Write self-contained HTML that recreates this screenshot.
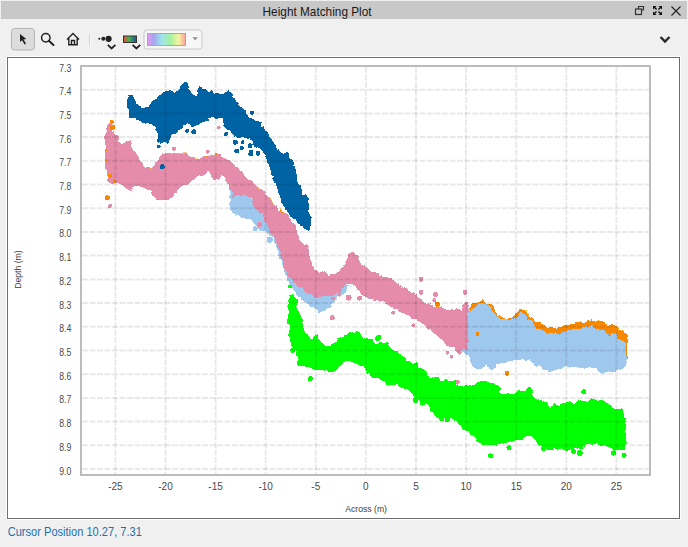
<!DOCTYPE html>
<html><head><meta charset="utf-8">
<style>
html,body{margin:0;padding:0;}
body{width:688px;height:547px;background:#f0f0f0;position:relative;overflow:hidden;font-family:"Liberation Sans",sans-serif;}
svg{position:absolute;left:0;top:0;}
</style></head>
<body>
<svg width="688" height="547" viewBox="0 0 688 547" shape-rendering="auto">
<!-- title bar -->
<rect x="1" y="1" width="686" height="18" fill="#c8c8c8"/>
<text x="262.6" y="16" font-family="Liberation Sans" font-size="12.2" fill="#1a1a1a" textLength="109" lengthAdjust="spacingAndGlyphs">Height Matching Plot</text>
<!-- restore icon -->
<g fill="none" stroke="#333" stroke-width="1.2">
<rect x="635.5" y="9" width="6" height="5.5"/>
<path d="M638.5 9 V6.5 H643.5 V10 H641.5"/>
</g>
<!-- fullscreen icon -->
<g fill="#111">
<path d="M653 6 h3.5 l-1.2 1.2 1.8 1.8 -1 1 -1.8 -1.8 -1.3 1.3z"/>
<path d="M662 6 v3.5 l-1.2 -1.2 -1.8 1.8 -1 -1 1.8 -1.8 -1.3 -1.3z"/>
<path d="M653 15 v-3.5 l1.2 1.2 1.8 -1.8 1 1 -1.8 1.8 1.3 1.3z"/>
<path d="M662 15 h-3.5 l1.2 -1.2 -1.8 -1.8 1 -1 1.8 1.8 1.3 -1.3z"/>
</g>
<!-- close -->
<path d="M671.5 6.5 L680.5 15.5 M680.5 6.5 L671.5 15.5" stroke="#222" stroke-width="1.1" fill="none"/>

<!-- toolbar -->
<rect x="11.5" y="28.5" width="23" height="21.5" rx="3" fill="#dcdcdc" stroke="#b4b4b4" stroke-width="1"/>
<path d="M20 34 L20 42 L22 40.2 L24.6 44.4 L26 43.6 L23.5 39.4 L26.3 39 Z" fill="#222"/>
<circle cx="45.8" cy="37.8" r="4.2" fill="none" stroke="#222" stroke-width="1.5"/>
<path d="M48.8 40.8 L53.5 45" stroke="#222" stroke-width="2" stroke-linecap="round"/>
<g fill="none" stroke="#222" stroke-width="1.4">
<path d="M67 39.5 L73 33.5 L79 39.5 M68.8 38.2 V44.8 H77.2 V38.2 M71.5 44.8 V40.5 H74.5 V44.8"/>
</g>
<rect x="89" y="34" width="1" height="11" fill="#d4d4d4"/>
<rect x="90" y="34" width="1" height="11" fill="#fafafa"/>
<g fill="#222">
<circle cx="99.3" cy="38.8" r="1"/>
<circle cx="103.3" cy="38.8" r="2"/>
<circle cx="108.6" cy="38.8" r="3.1"/>
</g>
<path d="M107.8 44.8 L111.6 48.5 L115.4 44.8" fill="none" stroke="#222" stroke-width="1.8"/>
<defs>
<linearGradient id="cb" x1="0" x2="1" y1="0" y2="0">
<stop offset="0" stop-color="#e8502a"/><stop offset="0.45" stop-color="#3cb34a"/><stop offset="1" stop-color="#1f4fa0"/>
</linearGradient>
<linearGradient id="pal" x1="0" x2="1" y1="0" y2="0">
<stop offset="0" stop-color="#e39cef"/>
<stop offset="0.17" stop-color="#a3a6f0"/>
<stop offset="0.38" stop-color="#9fe7ea"/>
<stop offset="0.6" stop-color="#a4f0a2"/>
<stop offset="0.82" stop-color="#f5f5a0"/>
<stop offset="1" stop-color="#f7a09c"/>
</linearGradient>
</defs>
<rect x="123.5" y="36" width="13" height="6.5" fill="url(#cb)" stroke="#333" stroke-width="1"/>
<path d="M132.6 44.8 L136.4 48.5 L140.2 44.8" fill="none" stroke="#222" stroke-width="1.8"/>
<rect x="144" y="30" width="58" height="19" rx="3" fill="#f7f7f7" stroke="#c8c8c8" stroke-width="1"/>
<rect x="147.5" y="33.5" width="38" height="12" fill="url(#pal)" stroke="#a8a8a8" stroke-width="1"/>
<path d="M192.4 37.3 L198 37.3 L195.2 40.3 Z" fill="#8c8c8c"/>
<path d="M660.5 37 L665 41.5 L669.5 37" fill="none" stroke="#2a2a2a" stroke-width="2.4"/>

<!-- chart frame -->
<rect x="6.5" y="56.5" width="674" height="463" fill="none" stroke="#ffffff" stroke-width="1"/>
<rect x="7.5" y="57.5" width="672" height="461" fill="#ffffff" stroke="#6e6e6e" stroke-width="1"/>

<!-- data -->
<defs><filter id="rough" x="-5%" y="-5%" width="110%" height="110%"><feTurbulence type="fractalNoise" baseFrequency="0.2" numOctaves="1" seed="3" result="t"/><feDisplacementMap in="SourceGraphic" in2="t" scale="5" xChannelSelector="R" yChannelSelector="G"/></filter></defs>
<!--DATA-->
<g filter="url(#rough)">
<path shape-rendering="crispEdges" fill="#f78800" d="M467.0 306.0 L469.1 308.3 L473.7 302.9 L479.2 301.0 L484.7 300.1 L493.8 308.3 L498.4 314.7 L504.8 317.5 L509.4 318.4 L514.8 314.7 L520.3 308.3 L524.9 310.2 L530.4 316.6 L535.0 321.1 L542.3 323.9 L549.6 328.4 L556.9 327.5 L560.5 328.4 L566.0 325.6 L573.3 323.8 L582.4 322.0 L591.6 319.3 L594.3 320.2 L600.7 322.0 L608.0 324.7 L615.3 325.6 L619.0 329.3 L625.4 333.0 L626.7 333.9 L626.7 359.5 L620.0 350.0 L600.0 340.0 L560.0 340.0 L500.0 325.0 L467.0 315.0 Z"/>
<path d="M197.0 159.5 L211.0 156.5" stroke="#f78800" stroke-width="2.2" fill="none" stroke-linecap="round"/><path d="M216.0 154.0 L225.5 159.5" stroke="#f78800" stroke-width="2.2" fill="none" stroke-linecap="round"/><path d="M257.3 187.5 L271.9 202.2" stroke="#f78800" stroke-width="2.2" fill="none" stroke-linecap="round"/><path d="M281.0 210.4 L286.6 215.0" stroke="#f78800" stroke-width="2.2" fill="none" stroke-linecap="round"/><path d="M147.0 168.0 L153.0 168.5" stroke="#f78800" stroke-width="2.2" fill="none" stroke-linecap="round"/><path d="M163.0 154.0 L186.0 154.5" stroke="#f78800" stroke-width="2.2" fill="none" stroke-linecap="round"/>
<path shape-rendering="crispEdges" fill="#9fc8ee" d="M240.0 180.0 L229.5 190.0 L230.2 197.3 L229.5 204.6 L231.0 211.9 L237.5 216.3 L244.9 217.8 L251.4 219.2 L254.4 223.6 L257.3 228.0 L260.9 231.7 L266.8 232.4 L270.4 236.8 L274.1 239.7 L277.0 248.5 L279.9 257.3 L282.9 266.0 L286.5 278.4 L291.9 287.5 L299.3 296.7 L306.6 303.1 L315.7 307.6 L318.4 313.1 L324.8 310.4 L330.3 305.8 L335.8 299.4 L343.1 293.0 L348.6 287.5 L355.9 286.6 L361.4 293.0 L370.0 299.0 L380.0 301.0 L390.0 305.0 L400.0 311.0 L410.0 316.0 L420.0 321.0 L430.0 328.0 L440.0 338.0 L450.0 346.0 L460.0 351.0 L466.0 353.0 L471.0 360.4 L472.8 367.8 L480.1 369.6 L485.6 365.9 L492.0 369.6 L496.6 364.1 L505.7 362.3 L513.0 360.4 L518.5 360.4 L524.0 358.6 L525.8 363.2 L529.5 358.6 L533.1 362.3 L535.0 367.8 L540.4 365.9 L544.1 369.6 L551.4 371.4 L560.0 367.8 L566.0 366.8 L573.3 366.8 L582.4 369.5 L587.9 367.7 L597.0 369.5 L604.4 373.2 L617.2 371.4 L626.3 366.8 L626.3 343.0 L618.1 338.4 L615.3 333.0 L609.8 334.8 L604.4 330.2 L597.0 329.3 L591.6 325.6 L582.4 328.4 L573.3 329.3 L564.1 331.1 L559.6 334.8 L555.0 332.0 L553.0 334.0 L546.0 332.0 L538.0 328.0 L531.0 322.0 L525.0 314.0 L520.0 313.0 L515.0 318.0 L510.0 320.0 L500.0 318.0 L492.0 309.0 L486.0 302.0 L480.0 303.0 L470.0 310.0 L467.0 307.0 L466.0 320.0 L440.0 318.0 L400.0 300.0 L370.0 288.0 L340.0 285.0 L310.0 282.0 L292.0 268.0 L276.0 232.0 L256.0 202.0 L240.0 192.0 Z"/>
<path shape-rendering="crispEdges" fill="#e48caa" d="M105.5 132.0 L108.2 122.8 L111.0 121.0 L112.8 128.3 L114.6 134.7 L117.4 135.6 L118.3 142.0 L123.8 142.9 L128.3 142.0 L131.1 141.1 L132.0 148.4 L135.6 153.9 L139.3 159.4 L143.0 164.8 L145.7 167.6 L151.2 168.5 L154.8 164.8 L158.5 158.4 L163.1 153.9 L168.6 152.0 L173.1 153.0 L178.6 153.9 L185.9 153.9 L191.4 157.5 L197.3 159.0 L203.2 157.5 L211.9 156.1 L217.0 153.9 L221.4 154.6 L225.1 159.0 L230.9 161.2 L234.6 164.9 L238.2 169.2 L243.4 173.6 L248.5 179.5 L252.9 182.4 L257.3 186.8 L263.1 191.9 L267.5 197.0 L272.6 201.7 L278.5 210.5 L285.8 213.4 L291.6 219.2 L296.0 226.5 L297.5 233.9 L299.3 240.0 L304.7 245.5 L308.4 248.2 L309.3 256.5 L312.0 263.8 L314.8 270.2 L319.4 272.0 L323.9 270.2 L328.5 274.7 L335.8 273.8 L341.3 269.3 L346.8 261.9 L348.6 253.7 L352.3 251.9 L357.8 256.5 L359.6 263.8 L365.1 265.6 L373.0 273.1 L381.1 275.1 L391.2 277.1 L395.2 282.1 L405.2 288.2 L413.3 293.2 L419.3 297.2 L425.4 302.3 L433.4 305.3 L441.5 307.3 L447.5 310.3 L453.5 310.3 L457.6 308.3 L461.6 310.3 L463.6 303.3 L467.5 303.3 L467.5 348.5 L465.6 348.5 L459.6 353.6 L453.5 348.5 L449.5 346.5 L441.5 340.5 L435.4 334.4 L429.4 329.4 L423.4 324.4 L417.3 320.4 L413.3 318.4 L405.2 314.3 L397.2 310.3 L387.1 304.3 L377.1 300.2 L369.0 298.2 L365.1 296.7 L359.6 291.2 L354.1 284.8 L348.6 283.9 L341.3 289.4 L335.8 294.8 L328.5 296.7 L321.2 296.7 L315.7 296.7 L308.4 293.0 L301.1 287.5 L293.8 282.0 L288.3 276.6 L284.0 266.5 L280.5 256.0 L277.0 242.6 L274.1 236.8 L269.7 232.4 L266.8 226.5 L263.9 219.2 L262.4 211.9 L258.7 213.4 L258.0 209.0 L252.9 204.6 L251.4 198.8 L243.4 194.4 L237.5 195.8 L232.4 197.3 L231.7 190.0 L228.7 189.7 L228.0 183.9 L225.1 178.0 L221.4 175.1 L219.2 180.2 L213.4 179.5 L211.2 175.1 L207.5 171.4 L206.1 174.4 L200.2 175.1 L195.8 177.3 L190.0 183.1 L180.4 186.8 L173.1 195.9 L167.6 200.5 L158.5 199.6 L153.0 195.9 L151.2 190.4 L145.7 188.6 L136.6 186.8 L129.3 190.4 L122.9 186.8 L118.3 183.1 L111.0 183.1 L108.2 181.3 L107.3 174.0 L105.5 164.8 L105.1 146.6 Z"/>
</g>
<circle shape-rendering="crispEdges" cx="112.8" cy="127.4" r="2.5" fill="#f78800"/><circle shape-rendering="crispEdges" cx="111.9" cy="121.9" r="2.0" fill="#f78800"/><circle shape-rendering="crispEdges" cx="107.3" cy="197.8" r="2.5" fill="#f78800"/><circle shape-rendering="crispEdges" cx="110.0" cy="175.8" r="2.0" fill="#f78800"/><circle shape-rendering="crispEdges" cx="114.6" cy="181.3" r="2.0" fill="#f78800"/><circle shape-rendering="crispEdges" cx="437.4" cy="304.3" r="2.5" fill="#f78800"/><circle shape-rendering="crispEdges" cx="507.0" cy="373.3" r="2.5" fill="#f78800"/><circle shape-rendering="crispEdges" cx="477.4" cy="333.9" r="2.0" fill="#f78800"/><circle shape-rendering="crispEdges" cx="106.0" cy="160.0" r="1.5" fill="#f78800"/><circle shape-rendering="crispEdges" cx="106.0" cy="150.0" r="1.5" fill="#f78800"/>
<circle shape-rendering="crispEdges" cx="255.1" cy="228.7" r="2.5" fill="#9fc8ee"/><circle shape-rendering="crispEdges" cx="269.7" cy="239.7" r="3.0" fill="#9fc8ee"/>
<circle shape-rendering="crispEdges" cx="174.0" cy="148.7" r="2.0" fill="#e48caa"/><circle shape-rendering="crispEdges" cx="207.7" cy="151.6" r="2.0" fill="#e48caa"/><circle shape-rendering="crispEdges" cx="218.7" cy="127.5" r="2.0" fill="#e48caa"/><circle shape-rendering="crispEdges" cx="110.0" cy="206.0" r="2.0" fill="#e48caa"/><circle shape-rendering="crispEdges" cx="306.6" cy="246.4" r="2.0" fill="#e48caa"/><circle shape-rendering="crispEdges" cx="348.6" cy="297.6" r="3.0" fill="#e48caa"/><circle shape-rendering="crispEdges" cx="359.6" cy="298.1" r="2.5" fill="#e48caa"/><circle shape-rendering="crispEdges" cx="332.2" cy="317.7" r="2.5" fill="#e48caa"/><circle shape-rendering="crispEdges" cx="421.0" cy="279.1" r="2.5" fill="#e48caa"/><circle shape-rendering="crispEdges" cx="421.0" cy="292.2" r="2.5" fill="#e48caa"/><circle shape-rendering="crispEdges" cx="435.4" cy="294.6" r="2.5" fill="#e48caa"/><circle shape-rendering="crispEdges" cx="434.4" cy="300.2" r="2.0" fill="#e48caa"/><circle shape-rendering="crispEdges" cx="465.0" cy="292.2" r="2.5" fill="#e48caa"/><circle shape-rendering="crispEdges" cx="393.2" cy="312.7" r="2.0" fill="#e48caa"/><circle shape-rendering="crispEdges" cx="413.3" cy="325.4" r="2.0" fill="#e48caa"/><circle shape-rendering="crispEdges" cx="447.5" cy="352.6" r="2.0" fill="#e48caa"/><circle shape-rendering="crispEdges" cx="451.5" cy="356.6" r="2.0" fill="#e48caa"/><circle shape-rendering="crispEdges" cx="459.6" cy="352.6" r="2.0" fill="#e48caa"/><circle shape-rendering="crispEdges" cx="457.3" cy="382.1" r="2.5" fill="#e48caa"/><circle shape-rendering="crispEdges" cx="259.5" cy="224.4" r="2.5" fill="#e48caa"/><circle shape-rendering="crispEdges" cx="333.0" cy="298.5" r="2.0" fill="#e48caa"/><circle shape-rendering="crispEdges" cx="339.5" cy="294.8" r="2.0" fill="#e48caa"/>
<g filter="url(#rough)">
<path shape-rendering="crispEdges" fill="#0064a4" d="M128.5 95.4 L133.2 95.4 L137.5 106.3 L142.0 108.5 L147.0 106.3 L151.4 104.0 L156.5 97.5 L163.9 92.4 L169.7 90.2 L174.1 91.7 L179.2 89.5 L180.0 85.8 L184.3 82.9 L188.0 83.7 L188.7 89.5 L193.1 93.9 L196.0 96.8 L196.8 91.7 L199.7 86.6 L204.0 88.0 L207.7 91.7 L211.4 91.0 L215.8 93.2 L218.8 92.4 L221.0 94.6 L227.5 92.4 L229.0 91.0 L234.1 93.9 L233.4 96.8 L237.0 101.9 L238.5 106.3 L242.9 108.5 L245.8 110.7 L245.8 113.6 L249.5 117.3 L253.1 118.7 L256.8 121.7 L261.2 123.1 L261.2 126.8 L264.8 127.5 L265.6 131.9 L268.5 135.6 L272.9 141.4 L277.4 148.2 L282.9 152.8 L287.5 152.8 L290.2 156.5 L293.9 163.8 L296.6 172.9 L298.4 183.9 L303.0 189.4 L303.0 193.0 L307.6 198.5 L308.5 204.0 L309.4 211.3 L311.2 220.4 L310.3 229.6 L306.7 229.6 L299.4 224.1 L293.9 218.6 L287.5 213.1 L282.9 205.8 L279.3 194.8 L276.5 185.7 L271.9 174.7 L268.3 163.8 L264.6 154.6 L261.0 149.1 L253.7 145.5 L251.8 140.0 L245.0 137.7 L238.5 137.0 L233.4 137.7 L232.0 134.0 L226.8 129.7 L223.2 125.3 L223.9 118.7 L219.5 118.0 L213.7 117.3 L210.0 116.5 L207.7 116.5 L208.5 120.2 L201.9 122.4 L197.5 125.3 L193.1 126.0 L188.7 123.9 L182.9 125.3 L180.0 130.4 L172.6 134.1 L170.4 138.5 L166.8 143.6 L161.7 142.9 L158.0 138.5 L155.0 126.8 L150.7 123.9 L142.0 123.1 L137.5 118.7 L130.2 118.0 L128.8 113.6 L128.0 101.9 Z"/>
</g>
<circle shape-rendering="crispEdges" cx="187.3" cy="130.9" r="2.0" fill="#0064a4"/><circle shape-rendering="crispEdges" cx="193.8" cy="131.9" r="2.5" fill="#0064a4"/><circle shape-rendering="crispEdges" cx="158.7" cy="146.5" r="2.0" fill="#0064a4"/><circle shape-rendering="crispEdges" cx="158.7" cy="140.7" r="2.0" fill="#0064a4"/><circle shape-rendering="crispEdges" cx="162.2" cy="166.7" r="2.5" fill="#0064a4"/><circle shape-rendering="crispEdges" cx="226.0" cy="134.0" r="2.0" fill="#0064a4"/><circle shape-rendering="crispEdges" cx="235.3" cy="142.2" r="2.5" fill="#0064a4"/><circle shape-rendering="crispEdges" cx="242.6" cy="142.2" r="2.0" fill="#0064a4"/><circle shape-rendering="crispEdges" cx="236.8" cy="151.0" r="2.5" fill="#0064a4"/><circle shape-rendering="crispEdges" cx="241.9" cy="148.0" r="2.0" fill="#0064a4"/><circle shape-rendering="crispEdges" cx="250.0" cy="145.8" r="2.5" fill="#0064a4"/><circle shape-rendering="crispEdges" cx="250.7" cy="153.9" r="2.5" fill="#0064a4"/><circle shape-rendering="crispEdges" cx="258.0" cy="153.2" r="2.5" fill="#0064a4"/><circle shape-rendering="crispEdges" cx="252.0" cy="112.9" r="2.0" fill="#0064a4"/><circle shape-rendering="crispEdges" cx="251.0" cy="151.9" r="2.0" fill="#0064a4"/>
<g filter="url(#rough)">
<path shape-rendering="crispEdges" fill="#00ff00" d="M289.2 294.8 L292.9 294.0 L296.5 298.5 L297.4 307.6 L301.0 316.5 L302.9 325.6 L304.7 332.9 L309.3 338.4 L313.8 339.3 L316.6 334.7 L319.3 341.1 L323.9 344.8 L329.4 345.7 L334.8 342.0 L338.5 338.4 L344.0 336.6 L349.5 332.9 L355.9 331.1 L360.4 333.8 L364.1 338.4 L370.5 339.3 L375.1 343.9 L382.3 342.8 L386.9 342.8 L391.5 348.3 L396.9 351.9 L404.3 356.5 L407.9 362.0 L418.0 363.8 L418.9 367.5 L424.4 369.3 L426.2 375.7 L433.5 377.5 L438.1 376.6 L440.8 381.2 L445.4 380.3 L448.1 383.0 L450.0 380.3 L455.4 380.3 L457.3 384.8 L462.8 386.7 L465.0 386.5 L472.3 385.5 L478.7 382.8 L486.9 381.0 L493.3 382.8 L499.7 388.3 L500.6 393.8 L508.9 393.8 L514.4 393.8 L518.9 390.1 L525.3 390.1 L529.0 386.5 L532.6 391.9 L534.5 397.4 L540.0 400.2 L545.4 402.0 L550.9 407.5 L554.6 402.9 L558.2 405.6 L560.5 403.8 L567.8 401.0 L573.3 403.8 L580.6 400.1 L587.9 401.9 L591.6 398.3 L597.0 400.1 L603.4 400.1 L608.0 403.8 L613.5 407.4 L622.6 409.3 L624.5 418.4 L626.3 422.0 L626.3 449.5 L620.8 449.5 L613.5 449.5 L608.0 446.7 L600.7 445.8 L595.2 444.0 L587.9 444.0 L582.4 447.6 L575.1 447.6 L566.0 451.3 L562.3 449.5 L556.4 448.6 L550.9 450.4 L545.4 448.6 L538.1 445.0 L534.5 437.6 L527.2 435.8 L518.0 441.3 L510.7 441.3 L503.4 443.1 L494.3 445.0 L483.3 445.0 L476.9 441.3 L473.2 434.0 L466.8 432.2 L460.9 426.9 L451.8 417.8 L442.6 419.6 L435.3 415.9 L429.8 408.6 L424.4 403.1 L417.0 399.5 L411.6 394.0 L406.1 388.5 L400.6 385.8 L393.3 384.8 L387.8 384.8 L382.3 380.3 L373.2 376.8 L367.8 373.1 L364.1 367.6 L356.8 364.0 L347.6 360.3 L342.2 364.0 L334.8 372.2 L327.5 371.3 L320.2 369.5 L312.9 369.5 L305.6 367.6 L300.1 365.8 L298.3 358.5 L296.5 351.2 L292.8 347.5 L291.0 340.2 L288.2 336.6 L290.1 327.4 L288.2 321.9 L288.2 311.0 Z"/>
</g>
<circle shape-rendering="crispEdges" cx="292.8" cy="350.3" r="2.5" fill="#00ff00"/><circle shape-rendering="crispEdges" cx="310.2" cy="378.6" r="2.5" fill="#00ff00"/><circle shape-rendering="crispEdges" cx="300.1" cy="363.1" r="3.0" fill="#00ff00"/><circle shape-rendering="crispEdges" cx="377.8" cy="338.4" r="2.5" fill="#00ff00"/><circle shape-rendering="crispEdges" cx="370.9" cy="340.6" r="2.0" fill="#00ff00"/><circle shape-rendering="crispEdges" cx="378.7" cy="337.3" r="2.5" fill="#00ff00"/><circle shape-rendering="crispEdges" cx="415.2" cy="400.4" r="2.5" fill="#00ff00"/><circle shape-rendering="crispEdges" cx="422.5" cy="403.1" r="2.5" fill="#00ff00"/><circle shape-rendering="crispEdges" cx="441.7" cy="418.7" r="2.5" fill="#00ff00"/><circle shape-rendering="crispEdges" cx="447.2" cy="419.6" r="2.5" fill="#00ff00"/><circle shape-rendering="crispEdges" cx="490.6" cy="455.9" r="2.5" fill="#00ff00"/><circle shape-rendering="crispEdges" cx="508.9" cy="447.7" r="2.5" fill="#00ff00"/><circle shape-rendering="crispEdges" cx="543.6" cy="448.6" r="2.5" fill="#00ff00"/><circle shape-rendering="crispEdges" cx="583.9" cy="391.9" r="2.5" fill="#00ff00"/><circle shape-rendering="crispEdges" cx="573.3" cy="451.3" r="2.5" fill="#00ff00"/><circle shape-rendering="crispEdges" cx="579.7" cy="453.1" r="3.0" fill="#00ff00"/><circle shape-rendering="crispEdges" cx="613.5" cy="453.1" r="2.5" fill="#00ff00"/><circle shape-rendering="crispEdges" cx="624.1" cy="455.3" r="2.5" fill="#00ff00"/><circle shape-rendering="crispEdges" cx="290.1" cy="286.6" r="2.0" fill="#00ff00"/>
<!--/DATA-->
<g id="grid" stroke="#000000" stroke-opacity="0.085" stroke-width="2" stroke-dasharray="6 1.5" fill="none">
<line x1="115.4" y1="67" x2="115.4" y2="474"/>
<line x1="165.5" y1="67" x2="165.5" y2="474"/>
<line x1="215.6" y1="67" x2="215.6" y2="474"/>
<line x1="265.7" y1="67" x2="265.7" y2="474"/>
<line x1="315.8" y1="67" x2="315.8" y2="474"/>
<line x1="365.9" y1="67" x2="365.9" y2="474"/>
<line x1="416.0" y1="67" x2="416.0" y2="474"/>
<line x1="466.1" y1="67" x2="466.1" y2="474"/>
<line x1="516.2" y1="67" x2="516.2" y2="474"/>
<line x1="566.3" y1="67" x2="566.3" y2="474"/>
<line x1="616.4" y1="67" x2="616.4" y2="474"/>
<line x1="82" y1="89.7" x2="649" y2="89.7"/>
<line x1="82" y1="113.4" x2="649" y2="113.4"/>
<line x1="82" y1="137.1" x2="649" y2="137.1"/>
<line x1="82" y1="160.8" x2="649" y2="160.8"/>
<line x1="82" y1="184.5" x2="649" y2="184.5"/>
<line x1="82" y1="208.2" x2="649" y2="208.2"/>
<line x1="82" y1="231.9" x2="649" y2="231.9"/>
<line x1="82" y1="255.6" x2="649" y2="255.6"/>
<line x1="82" y1="279.4" x2="649" y2="279.4"/>
<line x1="82" y1="303.1" x2="649" y2="303.1"/>
<line x1="82" y1="326.8" x2="649" y2="326.8"/>
<line x1="82" y1="350.5" x2="649" y2="350.5"/>
<line x1="82" y1="374.2" x2="649" y2="374.2"/>
<line x1="82" y1="397.9" x2="649" y2="397.9"/>
<line x1="82" y1="421.6" x2="649" y2="421.6"/>
<line x1="82" y1="445.3" x2="649" y2="445.3"/>
<line x1="82" y1="469.0" x2="649" y2="469.0"/>
</g>
<!-- axes -->
<rect x="81" y="66" width="569" height="409" fill="none" stroke="#bcbcbc" stroke-width="2"/>
<g id="labels" font-family="Liberation Sans" font-size="10" fill="#4a4a4a">
<text x="59.2" y="71.5" textLength="12.1" lengthAdjust="spacingAndGlyphs">7.3</text>
<text x="59.2" y="95.2" textLength="12.1" lengthAdjust="spacingAndGlyphs">7.4</text>
<text x="59.2" y="118.9" textLength="12.1" lengthAdjust="spacingAndGlyphs">7.5</text>
<text x="59.2" y="142.6" textLength="12.1" lengthAdjust="spacingAndGlyphs">7.6</text>
<text x="59.2" y="166.3" textLength="12.1" lengthAdjust="spacingAndGlyphs">7.7</text>
<text x="59.2" y="190.0" textLength="12.1" lengthAdjust="spacingAndGlyphs">7.8</text>
<text x="59.2" y="213.7" textLength="12.1" lengthAdjust="spacingAndGlyphs">7.9</text>
<text x="59.2" y="237.4" textLength="12.1" lengthAdjust="spacingAndGlyphs">8.0</text>
<text x="59.2" y="261.1" textLength="12.1" lengthAdjust="spacingAndGlyphs">8.1</text>
<text x="59.2" y="284.9" textLength="12.1" lengthAdjust="spacingAndGlyphs">8.2</text>
<text x="59.2" y="308.6" textLength="12.1" lengthAdjust="spacingAndGlyphs">8.3</text>
<text x="59.2" y="332.3" textLength="12.1" lengthAdjust="spacingAndGlyphs">8.4</text>
<text x="59.2" y="356.0" textLength="12.1" lengthAdjust="spacingAndGlyphs">8.5</text>
<text x="59.2" y="379.7" textLength="12.1" lengthAdjust="spacingAndGlyphs">8.6</text>
<text x="59.2" y="403.4" textLength="12.1" lengthAdjust="spacingAndGlyphs">8.7</text>
<text x="59.2" y="427.1" textLength="12.1" lengthAdjust="spacingAndGlyphs">8.8</text>
<text x="59.2" y="450.8" textLength="12.1" lengthAdjust="spacingAndGlyphs">8.9</text>
<text x="59.2" y="474.5" textLength="12.1" lengthAdjust="spacingAndGlyphs">9.0</text>
<text x="115.4" y="490" text-anchor="middle">-25</text>
<text x="165.5" y="490" text-anchor="middle">-20</text>
<text x="215.6" y="490" text-anchor="middle">-15</text>
<text x="265.7" y="490" text-anchor="middle">-10</text>
<text x="315.8" y="490" text-anchor="middle">-5</text>
<text x="365.9" y="490" text-anchor="middle">0</text>
<text x="416.0" y="490" text-anchor="middle">5</text>
<text x="466.1" y="490" text-anchor="middle">10</text>
<text x="516.2" y="490" text-anchor="middle">15</text>
<text x="566.3" y="490" text-anchor="middle">20</text>
<text x="616.4" y="490" text-anchor="middle">25</text>
</g>
<text x="345.3" y="511.8" font-family="Liberation Sans" font-size="9" fill="#404040" textLength="41.7" lengthAdjust="spacingAndGlyphs">Across (m)</text>
<text transform="translate(21.3,288.8) rotate(-90)" font-family="Liberation Sans" font-size="9" fill="#404040" textLength="38.4" lengthAdjust="spacingAndGlyphs">Depth (m)</text>

<text x="7.7" y="535.5" font-family="Liberation Sans" font-size="12.2" fill="#1e70ac" textLength="134.2" lengthAdjust="spacingAndGlyphs">Cursor Position 10.27, 7.31</text>
</svg>
</body></html>
